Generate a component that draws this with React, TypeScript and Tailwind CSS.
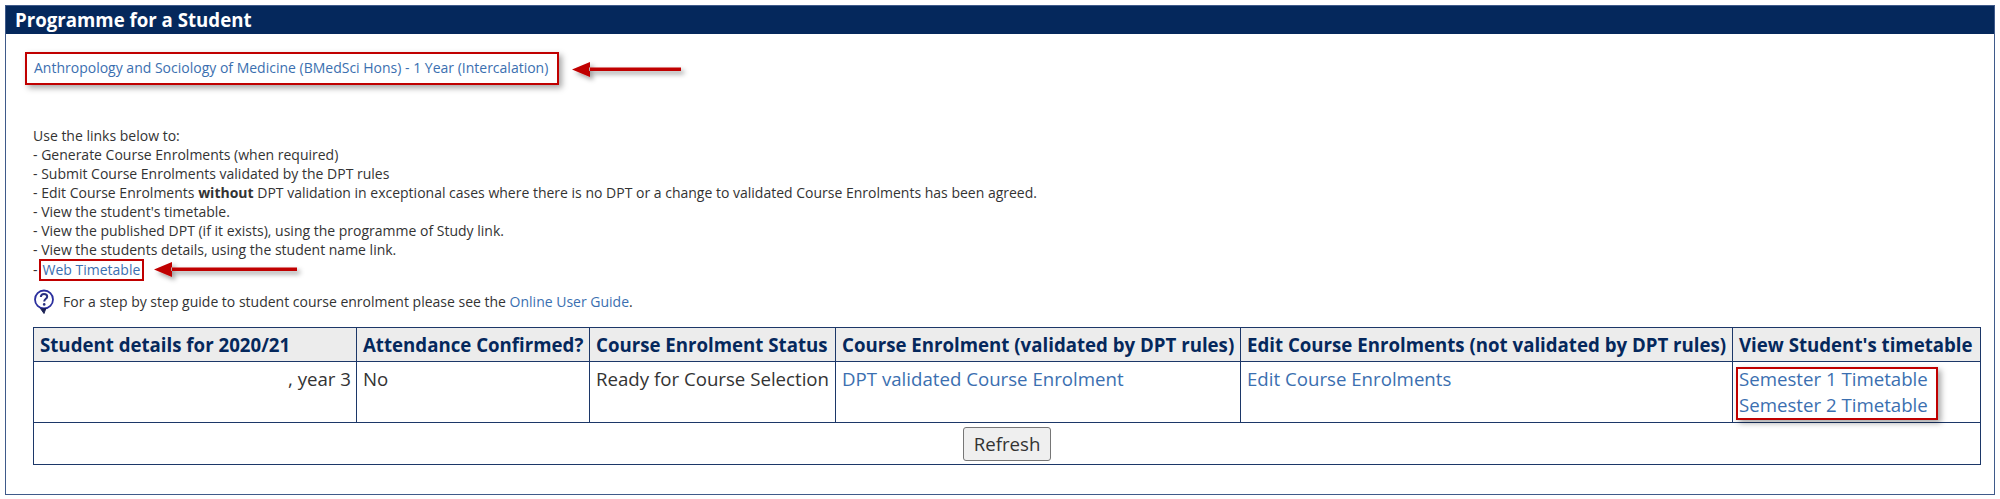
const FONT = "font-['Open_Sans',sans-serif]";

function Arrow({ className, width }: { className: string; width: number }) {
  const id = `arrowShadow${width}`;
  return (
    <svg className={className} width={width + 10} height={28} viewBox={`0 0 ${width + 10} 28`} fill="none">
      <defs>
        <filter id={id} x="-10%" y="-50%" width="120%" height="250%">
          <feDropShadow dx="3" dy="3" stdDeviation="2.5" floodColor="#000" floodOpacity="0.4" />
        </filter>
      </defs>
      <g filter={`url(#${id})`}>
        <path d={`M${width} 9.5H17V13H${width}Z M0 11.5L18 4V19Z`} fill="#c00000" />
      </g>
    </svg>
  );
}

function HelpIcon() {
  return (
    <svg width="22" height="25" viewBox="0 0 22 25" className="shrink-0">
      <circle cx="11" cy="10.5" r="9" fill="#ffffff" stroke="#2b2f9e" strokeWidth="1.8" />
      <path d="M7.5 19.5L11 24.5L13 19" fill="#1c2255" stroke="#1c2255" strokeWidth="1" />
      <path d="M7.8 8C8 5.8 9.4 5 11 5C12.8 5 14.2 6 14.2 7.7C14.2 9.8 11.2 10 11.2 12.6" fill="none" stroke="#28307f" strokeWidth="2" />
      <circle cx="11.2" cy="15.4" r="1.3" fill="#28307f" />
    </svg>
  );
}

const linkClass = "text-[#3b6fb0]";
const thClass = "border border-[#1c3768] bg-[#ececec] pl-[6px] pr-[5px] text-left align-middle font-bold text-[#05285c] whitespace-nowrap";
const tdClass = "border border-[#1c3768] pl-[6px] pr-[5px] pt-[4px] align-top text-[#333333] whitespace-nowrap";

export default function App() {
  return (
    <div className={`${FONT} h-[499px] w-[2000px] overflow-hidden bg-white pl-[5px] pt-[5px]`}>
      <div className="h-[490px] w-[1990px] border border-[#3f5a8a]">
        <div className="flex h-[28px] items-center bg-[#05285c] pl-[9px] text-[18.67px] font-bold text-white">
          Programme for a Student
        </div>
        <div className="relative pl-[19px] pt-[18px] text-[14px] leading-[19px] text-[#333333]">
          <div className="inline-block h-[33px] w-[534px] whitespace-nowrap border-2 border-[#c00000] pl-[7px] pt-[4px] shadow-[3px_3px_6px_rgba(0,0,0,0.35)]">
            <a className={linkClass}>Anthropology and Sociology of Medicine (BMedSci Hons) - 1 Year (Intercalation)</a>
          </div>
          <Arrow width={109} className="absolute left-[566px] top-[24px]" />

          <div className="mt-[41px] pl-[8px]">
            <div>Use the links below to:</div>
            <div>- Generate Course Enrolments (when required)</div>
            <div>- Submit Course Enrolments validated by the DPT rules</div>
            <div>
              - Edit Course Enrolments <b>without</b> DPT validation in exceptional cases where there is no DPT or a change to validated Course Enrolments has been agreed.
            </div>
            <div>- View the student's timetable.</div>
            <div>- View the published DPT (if it exists), using the programme of Study link.</div>
            <div>- View the students details, using the student name link.</div>
            <div className="relative">
              -
              <span className="ml-[1px] inline-block border-2 border-[#c00000] px-[2px] leading-[18px]">
                <a className={linkClass}>Web Timetable</a>
              </span>
              <Arrow width={143} className="absolute left-[121px] top-[-1px]" />
            </div>
            <div className="mt-[8px] flex items-center gap-[8px]">
              <HelpIcon />
              <span>
                For a step by step guide to student course enrolment please see the <a className={linkClass}>Online User Guide</a>.
              </span>
            </div>
          </div>

          <div className="relative ml-[8px] mt-[13px] w-[1948px] text-[18.67px] leading-[25px]">
            <table className="w-full table-fixed border-collapse">
              <thead>
                <tr className="h-[34px]">
                  <th className={`${thClass} w-[323px]`}>Student details for 2020/21</th>
                  <th className={`${thClass} w-[233px]`}>Attendance Confirmed?</th>
                  <th className={`${thClass} w-[246px]`}>Course Enrolment Status</th>
                  <th className={`${thClass} w-[405px]`}>Course Enrolment (validated by DPT rules)</th>
                  <th className={`${thClass} w-[492px]`}>Edit Course Enrolments (not validated by DPT rules)</th>
                  <th className={thClass}>View Student's timetable</th>
                </tr>
              </thead>
              <tbody>
                <tr className="h-[61px]">
                  <td className={`${tdClass} text-right`}>, year 3</td>
                  <td className={tdClass}>No</td>
                  <td className={tdClass}>Ready for Course Selection</td>
                  <td className={tdClass}><a className={linkClass}>DPT validated Course Enrolment</a></td>
                  <td className={tdClass}><a className={linkClass}>Edit Course Enrolments</a></td>
                  <td className={tdClass}>
                    <a className={`${linkClass} block leading-[25.5px]`}>Semester 1 Timetable</a>
                    <a className={`${linkClass} block leading-[25.5px]`}>Semester 2 Timetable</a>
                  </td>
                </tr>
                <tr className="h-[42px]">
                  <td colSpan={6} className="border border-[#1c3768] text-center align-middle">
                    <button className="h-[34px] w-[88px] rounded-[3px] border border-[#767676] bg-[#efefef] text-[18.67px] text-[#333333]">
                      Refresh
                    </button>
                  </td>
                </tr>
              </tbody>
            </table>
            <div className="absolute left-[1703px] top-[40px] h-[53px] w-[202px] border-2 border-[#c00000] shadow-[3px_3px_6px_rgba(0,0,0,0.35)]" />
          </div>
        </div>
      </div>
    </div>
  );
}
